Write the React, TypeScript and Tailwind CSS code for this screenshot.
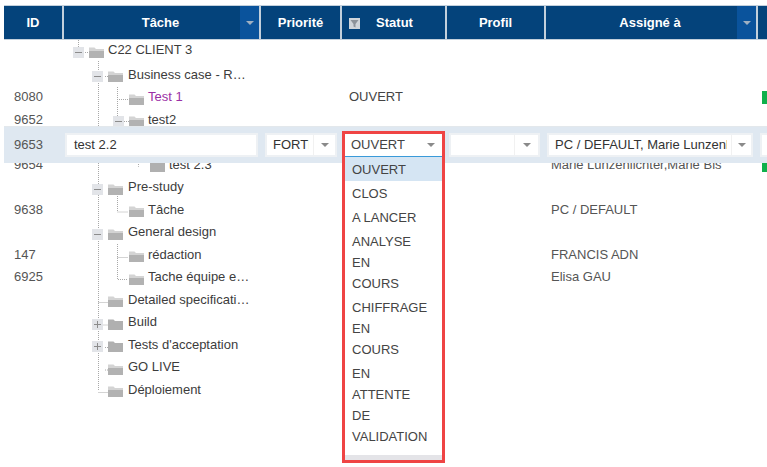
const font = "font-['Liberation_Sans',Arial,sans-serif]";

interface Row {
  id?: string;
  label: string;
  indent: number;
  toggle?: "minus" | "plus";
  closed?: boolean;
  purple?: boolean;
  statut?: string;
  assign?: string;
  green?: boolean;
}

// indent = x of the folder icon, relative to the tree column
const rows: Row[] = [
  { label: "C22 CLIENT 3", indent: 25, toggle: "minus" },
  { label: "Business case - R…", indent: 44, toggle: "minus" },
  { id: "8080", label: "Test 1", indent: 65, purple: true, statut: "OUVERT", green: true },
  { id: "9652", label: "test2", indent: 65, toggle: "minus" },
  { id: "9653", label: "test 2.2", indent: 86 },
  { id: "9654", label: "test 2.3", indent: 86, closed: true, assign: "Marie Lunzenlichter,Marie Bis", green: true },
  { label: "Pre-study", indent: 44, toggle: "minus" },
  { id: "9638", label: "Tâche", indent: 65, assign: "PC / DEFAULT" },
  { label: "General design", indent: 44, toggle: "minus" },
  { id: "147", label: "rédaction", indent: 65, assign: "FRANCIS ADN" },
  { id: "6925", label: "Tache équipe e…", indent: 65, assign: "Elisa GAU" },
  { label: "Detailed specificati…", indent: 44 },
  { label: "Build", indent: 44, toggle: "plus", closed: true },
  { label: "Tests d'acceptation", indent: 44, toggle: "plus", closed: true },
  { label: "GO LIVE", indent: 44 },
  { label: "Déploiement", indent: 44 },
];

const statuts = [
  ["OUVERT"],
  ["CLOS"],
  ["A LANCER"],
  ["ANALYSE", "EN", "COURS"],
  ["CHIFFRAGE", "EN", "COURS"],
  ["EN", "ATTENTE", "DE", "VALIDATION"],
];

function Folder({ closed }: { closed?: boolean }) {
  return (
    <svg width="16" height="12" viewBox="0 0 16 12" className="mt-[2px] shrink-0">
      <path d="M0 1.5 L5.5 1.5 L7 3 L15 3 L15 12 L0 12 Z" fill={closed ? "#b0b0b0" : "#d4d4d4"} />
      {!closed && <path d="M0 5 L15 5 L15 12 L0 12 Z" fill="#b2b2b2" />}
    </svg>
  );
}

function Toggle({ type }: { type: "minus" | "plus" }) {
  return (
    <span className="absolute top-1/2 -mt-[4px] -ml-[16px] flex h-[11px] w-[11px] items-center justify-center bg-[#e2e4e8]">
      <span className="relative block h-px w-[7px] bg-[#8c8c8c]">
        {type === "plus" && <span className="absolute -top-[3px] left-[3px] h-[7px] w-px bg-[#8c8c8c]" />}
      </span>
    </span>
  );
}

function HeaderCell({ label, width, sort, filter }: { label: string; width: string; sort?: boolean; filter?: boolean }) {
  return (
    <div className={`relative flex h-full shrink-0 items-center justify-center border-r-2 border-[#c3d0dc] bg-[#04437b] text-[13px] font-bold text-white ${width}`}>
      {filter && (
        <span className="absolute left-[7px] top-[12px] flex h-[11px] w-[11px] items-center justify-center bg-[#d0d5da]">
          <svg width="9" height="9" viewBox="0 0 9 9"><path d="M0.5 1 H8.5 L5.5 5 V8.5 L3.5 7.5 V5 Z" fill="#8d939a" /></svg>
        </span>
      )}
      <span className={filter ? "ml-[2px]" : sort ? "mr-[2px]" : ""}>{label}</span>
      {sort && (
        <span className="absolute right-0 top-0 flex h-full w-[19px] items-center justify-center bg-[#0a539c]">
          <span className="mt-px h-0 w-0 border-x-[4px] border-t-[4px] border-x-transparent border-t-[#9fb0c2]" />
        </span>
      )}
    </div>
  );
}

function Arrow() {
  return <span className="h-0 w-0 border-x-[4px] border-t-[4px] border-x-transparent border-t-[#8a8a8a]" />;
}

function EditSelect({ value, width, arrowBox }: { value: string; width: string; arrowBox: string }) {
  return (
    <div className={`flex h-[24px] shrink-0 items-center border-2 border-[#eef1f4] bg-white text-[13px] text-[#333] ${width}`}>
      <span className="mr-[4px] min-w-0 flex-1 overflow-hidden whitespace-nowrap pl-[6px]">{value}</span>
      <span className={`flex h-full shrink-0 items-center justify-center border-l border-[#f1f1f1] ${arrowBox}`}>
        <Arrow />
      </span>
    </div>
  );
}

export default function App() {
  return (
    <div className={`relative h-[467px] w-[767px] overflow-hidden bg-white ${font}`}>
      {/* Column headers */}
      <div className="pl-[4px] pt-[5px]">
        <div className="flex h-[35px] w-[790px] border-y border-[#c3d0dc]">
          <HeaderCell label="ID" width="w-[60px]" />
          <HeaderCell label="Tâche" width="w-[197px]" sort />
          <HeaderCell label="Priorité" width="w-[81px]" />
          <HeaderCell label="Statut" width="w-[105px]" filter />
          <HeaderCell label="Profil" width="w-[99px]" />
          <HeaderCell label="Assigné à" width="w-[212px]" sort />
          <HeaderCell label="" width="w-[40px]" />
        </div>
      </div>

      {/* Tree rows */}
      <div className="relative pl-[4px] pt-[1px] text-[13px] text-[#444]">
        {/* tree guide lines, relative to the rows block (y offset 40) */}
        <svg width="140" height="360" className="absolute left-0 top-0" fill="none" stroke="#a8a8a8" strokeDasharray="1 1">
          <path d="M78.5 0 V7 M85 12.5 H89" />
          <path d="M98.5 21 V351 M105 36.5 H108 M98.5 262.5 H108 M98.5 285 H108 M105 307.5 H108 M105 330 H108 M98.5 352.5 H108" />
          <path d="M117.5 47 V59.5 H128 M117.5 47 V77 M124 81.5 H129" />
          <path d="M117.5 148 V172 H128 M117.5 204 V239.5 H128 M117.5 217.5 H128" />
          <path d="M138.5 90 V126.5 H149" />
        </svg>
        {rows.map((r, i) => (
          <div key={i} className={`flex items-center ${i === 0 ? "h-[23px] pb-[3px]" : "h-[22.5px]"}`}>
            <div className="w-[60px] shrink-0 pb-[2px] pl-[10px] text-[#555]">{r.id}</div>
            <div className="relative flex h-full w-[197px] shrink-0 items-center" style={{ paddingLeft: r.indent }}>
              {r.toggle && <Toggle type={r.toggle} />}
              <Folder closed={r.closed} />
              <span className={`whitespace-nowrap pb-[2px] ${r.indent === 44 ? "ml-[4px]" : "ml-[3px]"} ${r.purple ? "text-[#9b2fa5]" : "text-[#3c3c3c]"}`}>{r.label}</span>
            </div>
            <div className="w-[81px] shrink-0" />
            <div className="w-[105px] shrink-0 pb-[2px] pl-[7px]">{r.statut}</div>
            <div className="w-[99px] shrink-0" />
            <div className="w-[212px] shrink-0 whitespace-nowrap pb-[2px] pl-[5px] text-[#555]">{r.assign}</div>
            {r.green && <div className="ml-[4px] h-[13px] w-[6px] shrink-0 bg-[#0fb04b]" />}
          </div>
        ))}
      </div>

      {/* Row being edited */}
      <div className="absolute left-[4px] top-[126px] flex h-[37px] w-[763px] items-center border-t border-[#e3e8ec] bg-[#dfe8f1] text-[13px]">
        <div className="w-[61px] shrink-0 pl-[10px] text-[#555]">9653</div>
        <div className="flex h-[24px] w-[193px] shrink-0 items-center border-2 border-[#eef1f4] bg-white pl-[7px] text-[#333]">test 2.2</div>
        <div className="ml-[7px] shrink-0"><EditSelect value="FORTE" width="w-[72px]" arrowBox="w-[22px]" /></div>
        <div className="w-[112px] shrink-0" />
        <div className="shrink-0"><EditSelect value="" width="w-[91px]" arrowBox="w-[24px]" /></div>
        <div className="ml-[7px] shrink-0"><EditSelect value="PC / DEFAULT, Marie Lunzenlichter" width="w-[206px]" arrowBox="w-[20px]" /></div>
        <div className="ml-[7px] h-[24px] w-[20px] shrink-0 border-2 border-[#eef1f4] bg-white" />
      </div>

      {/* Open Statut dropdown */}
      <div className="absolute left-[342px] top-[131px] w-[103px] border-[3px] border-[#ef4444] bg-white text-[13px] text-[#444]">
        <div className="flex h-[23px] items-center justify-between border-b border-[#3a9ad9] pl-[6px] pr-[7px]">
          <span>OUVERT</span>
          <Arrow />
        </div>
        <div className="pb-[7px]">
          {statuts.map((lines, i) => (
            <div key={i} className={`px-[7px] py-[1.5px] leading-[21px] ${i === 0 ? "bg-[#d5e5f3]" : ""}`}>
              {lines.map((l) => (
                <div key={l}>{l}</div>
              ))}
            </div>
          ))}
        </div>
        <div className="h-[5px] bg-[#e4e4e8]" />
      </div>
    </div>
  );
}
